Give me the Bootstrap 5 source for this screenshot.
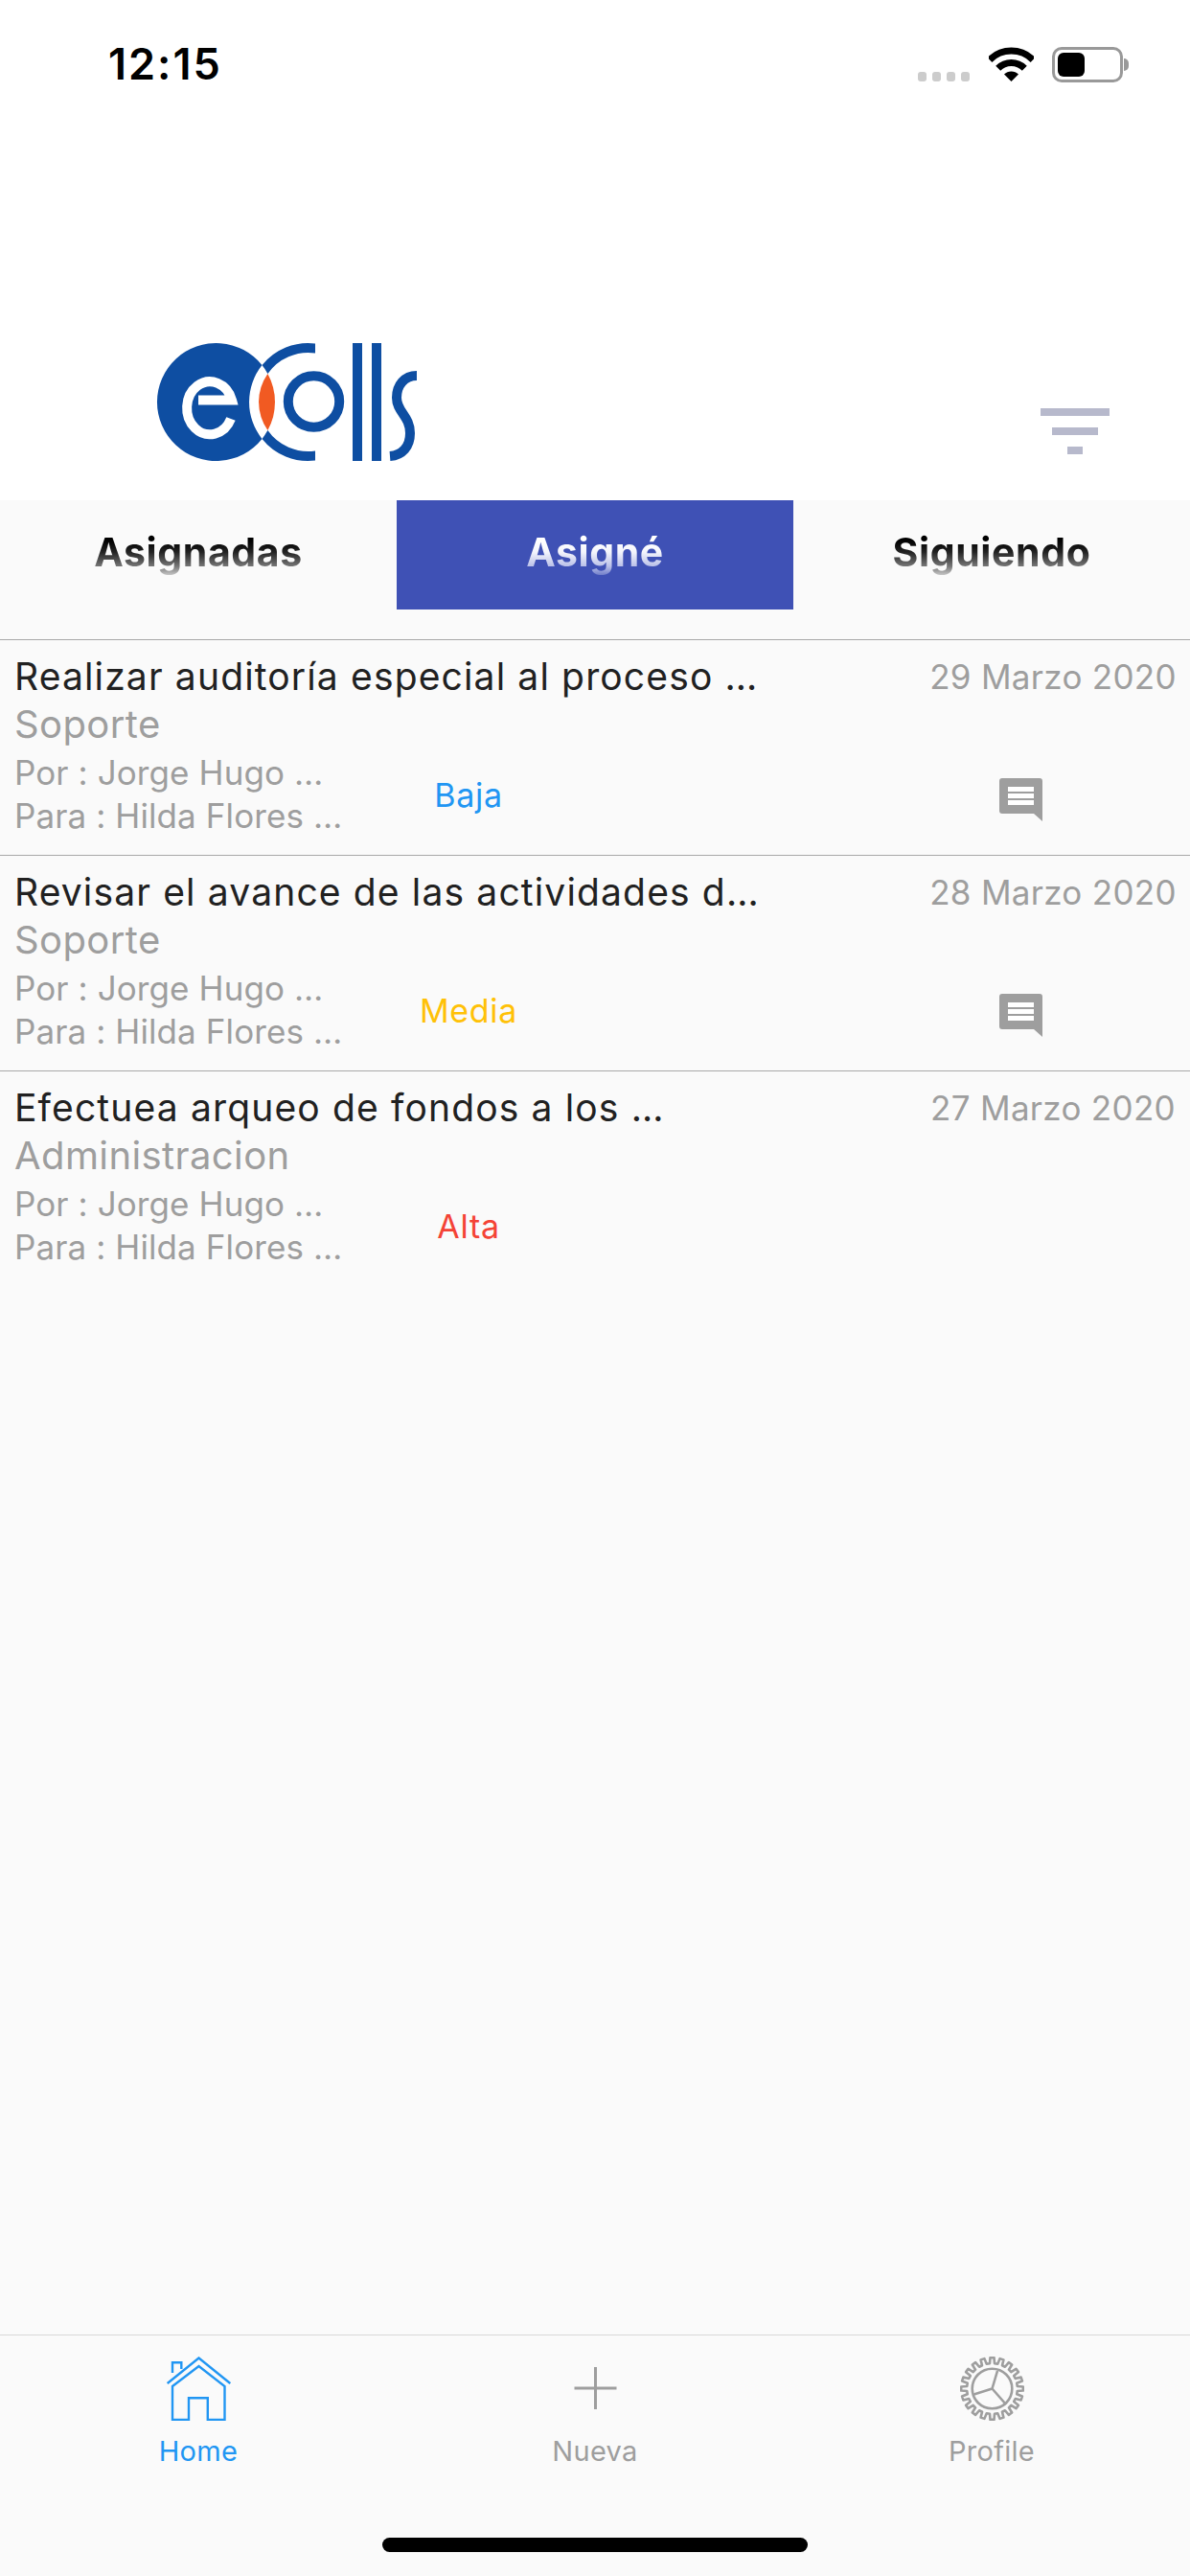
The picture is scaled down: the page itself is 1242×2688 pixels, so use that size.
<!DOCTYPE html>
<html lang="es">
<head>
<meta charset="utf-8">
<title>eColls</title>
<link href="https://cdn.jsdelivr.net/npm/bootstrap@5.3.0/dist/css/bootstrap.min.css" rel="stylesheet">
<style>
  html, body { margin: 0; height: 2688px; overflow: hidden; }
  body { background: #fafafa; font-family: Inter, "Liberation Sans", sans-serif; color: #212121; }
  .app-shell { height: 2688px; }
  .status-strip { height: 130px; background: #fff; padding: 0 65px 0 113px; }
  .clock { font-size: 45px; font-weight: 600; line-height: 1; color: #000; margin-top: 44px; letter-spacing: 2px; width: 845px; }
  .sig-dots { gap: 6px; margin-top: 75px; }
  .sig-dots span { width: 9px; height: 10px; border-radius: 3px; background: #ccc; display: block; }
  .wifi-glyph { width: 47px; height: 36px; margin-top: 49px; margin-left: 20px; }
  .batt { width: 74px; height: 37px; margin-top: 49px; margin-left: 19px; border: 3px solid #999; border-radius: 10px; padding: 3px; position: relative; }
  .batt-fill { width: 28px; height: 25px; background: #000; border-radius: 6px; }
  .batt::after { content: ""; position: absolute; left: 72px; top: 9px; width: 5px; height: 13px; background: #999; border-radius: 0 6px 6px 0; }
  .brand-strip { height: 392px; background: #fff; padding: 200px 0 0 130px; }
  .brand-logo { width: 330px; height: 170px; display: block; }
  .filter-glyph { width: 72px; height: 48px; margin: 96px 0 0 626px; }
  .tab-strip { height: 114px; }
  .tab-cell { height: 114px; }
  .tab-on { background: #3f51b5; }
  .tab-word { font-size: 41px; font-weight: 700; line-height: 60px; height: 60px; letter-spacing: .6px; background-clip: text; -webkit-background-clip: text; color: transparent; background-image: linear-gradient(to bottom, #000 30%, #222 50%, #777 75%, #fafafa 100%); }
  .tab-on .tab-word { background-image: linear-gradient(to bottom, #fff 30%, #f4f5fc 50%, #b9c0e8 75%, #3f51b5 100%); }
  .task-list { margin-top: 31px; }
  .task-list .task-row { height: 225px; border: 0; border-top: 1px solid #a8a8a8; border-radius: 0; background: transparent; padding: 13px 3px 0 15px; }
  .task-title { font-size: 39px; line-height: 50px; color: #212121; letter-spacing: 1.15px; white-space: nowrap; }
  .task-date { font-size: 35px; line-height: 50px; color: #9e9e9e; width: 280px; text-align: center; white-space: nowrap; letter-spacing: .3px; }
  .task-area { font-size: 40px; line-height: 50px; color: #9e9e9e; letter-spacing: .4px; }
  .task-meta { margin-top: 3px; }
  .task-people { width: 374px; font-size: 35px; line-height: 45px; color: #9e9e9e; letter-spacing: .1px; white-space: nowrap; }
  .task-prio { width: 200px; font-size: 34px; text-align: center; letter-spacing: .7px; }
  .prio-low { color: #2196f3; }
  .prio-mid { color: #ffc107; }
  .prio-high { color: #f44336; }
  .note-glyph { width: 45px; height: 45px; margin: 11px 0 0 454px; display: block; }
  .foot-bar { border-top: 1px solid #d8d8d8; height: 252px; }
  .foot-cell { color: #9e9e9e; font-size: 29px; line-height: 36px; padding-top: 22px; letter-spacing: .3px; }
  .foot-cell.is-on { color: #2196f3; }
  .foot-icon { width: 67px; height: 67px; display: block; margin: 0 auto 14px; }
  .home-pill { width: 444px; height: 15px; border-radius: 8px; background: #000; margin: 72px auto 0; }
</style>
</head>
<body>
<div class="app-shell d-flex flex-column">
  <div class="status-strip d-flex align-items-start">
    <div class="clock">12:15</div>
    <div class="sig-dots d-flex"><span></span><span></span><span></span><span></span></div>
    <svg class="wifi-glyph" viewBox="0 0 47 36" aria-hidden="true">
      <path d="M.9 13.4A32 32 0 0 1 46.1 13.4" fill="none" stroke="#000" stroke-width="7"/>
      <path d="M9.7 22.2A19.5 19.5 0 0 1 37.3 22.2" fill="none" stroke="#000" stroke-width="7"/>
      <path d="M23.5 36L16 28.5A10.6 10.6 0 0 1 31 28.5Z" fill="#000"/>
    </svg>
    <div class="batt"><div class="batt-fill"></div></div>
  </div>

  <div class="brand-strip d-flex align-items-start">
    <svg class="brand-logo flex-shrink-0" viewBox="0 0 330 170" role="img" aria-label="eColls">
      <path d="M143.5 51.1A61.5 61.5 0 1 0 143.5 127.9A61.5 61.5 0 0 1 143.5 51.1Z" fill="#0e4ea2"/>
      <path d="M143.5 51.1A61.5 61.5 0 0 1 199 28.5V38.5A51.5 51.5 0 0 0 149.4 59.9A61.5 61.5 0 0 0 143.5 51.1Z" fill="#0e4ea2"/>
      <path d="M143.5 127.9A61.5 61.5 0 0 0 199 150.5V140.5A51.5 51.5 0 0 1 149.4 119.1A61.5 61.5 0 0 1 143.5 127.9Z" fill="#0e4ea2"/>
      <path d="M149.4 59.9A61.5 61.5 0 0 1 149.4 119.1A51.5 51.5 0 0 1 149.4 59.9Z" fill="#f15a22"/>
      <path d="M77 87.5H112A24 27.5 0 1 0 111 107" fill="none" stroke="#fff" stroke-width="10"/>
      <circle cx="197.5" cy="89" r="26.7" fill="none" stroke="#0e4ea2" stroke-width="10"/>
      <rect x="238" y="28" width="10" height="123" fill="#0e4ea2"/>
      <rect x="258" y="28" width="10" height="123" fill="#0e4ea2"/>
      <path d="M305 62C292 62 284 72 284 85C284 100 298 104 298 122C298 136 290 145 277 146" fill="none" stroke="#0e4ea2" stroke-width="10"/>
    </svg>
    <svg class="filter-glyph flex-shrink-0" viewBox="0 0 72 48" aria-hidden="true">
      <rect x="0" y="0" width="72" height="8" fill="#b7b9cc"/>
      <rect x="12" y="20" width="48" height="8" fill="#b7b9cc"/>
      <rect x="28" y="40" width="16" height="8" fill="#b7b9cc"/>
    </svg>
  </div>

  <div class="tab-strip row g-0">
    <div class="tab-cell col-4 d-flex justify-content-center"><span class="tab-word mt-4">Asignadas</span></div>
    <div class="tab-cell tab-on col-4 d-flex justify-content-center"><span class="tab-word mt-4">Asigné</span></div>
    <div class="tab-cell col-4 d-flex justify-content-center"><span class="tab-word mt-4">Siguiendo</span></div>
  </div>

  <div class="task-list list-group">
    <div class="task-row list-group-item">
      <div class="d-flex justify-content-between">
        <div class="task-title">Realizar auditoría especial al proceso …</div>
        <div class="task-date">29 Marzo 2020</div>
      </div>
      <div class="task-area">Soporte</div>
      <div class="task-meta d-flex align-items-center">
        <div class="task-people"><div>Por : Jorge Hugo …</div><div>Para : Hilda Flores …</div></div>
        <div class="task-prio prio-low">Baja</div>
        <svg class="note-glyph" viewBox="0 0 45 45" aria-hidden="true"><path d="M3 0H42A3 3 0 0 1 45 3V45L36 37H3A3 3 0 0 1 0 34V3A3 3 0 0 1 3 0Z" fill="#9e9e9e"/><path d="M9 9H36V14H9ZM9 16H36V21H9ZM9 23H36V28H9Z" fill="#fff"/></svg>
      </div>
    </div>
    <div class="task-row list-group-item">
      <div class="d-flex justify-content-between">
        <div class="task-title">Revisar el avance de las actividades d…</div>
        <div class="task-date">28 Marzo 2020</div>
      </div>
      <div class="task-area">Soporte</div>
      <div class="task-meta d-flex align-items-center">
        <div class="task-people"><div>Por : Jorge Hugo …</div><div>Para : Hilda Flores …</div></div>
        <div class="task-prio prio-mid">Media</div>
        <svg class="note-glyph" viewBox="0 0 45 45" aria-hidden="true"><path d="M3 0H42A3 3 0 0 1 45 3V45L36 37H3A3 3 0 0 1 0 34V3A3 3 0 0 1 3 0Z" fill="#9e9e9e"/><path d="M9 9H36V14H9ZM9 16H36V21H9ZM9 23H36V28H9Z" fill="#fff"/></svg>
      </div>
    </div>
    <div class="task-row list-group-item">
      <div class="d-flex justify-content-between">
        <div class="task-title">Efectuea arqueo de fondos a los …</div>
        <div class="task-date">27 Marzo 2020</div>
      </div>
      <div class="task-area">Administracion</div>
      <div class="task-meta d-flex align-items-center">
        <div class="task-people"><div>Por : Jorge Hugo …</div><div>Para : Hilda Flores …</div></div>
        <div class="task-prio prio-high">Alta</div>
      </div>
    </div>
  </div>

  <div class="foot-bar mt-auto">
    <div class="row g-0">
      <div class="foot-cell is-on col-4 text-center">
        <svg class="foot-icon" viewBox="0 0 67 67" fill="none" stroke="#2196f3" stroke-width="2.4" aria-hidden="true">
          <path d="M.7 28L33.5 1.5L66.3 28"/>
          <path d="M6 17V6.2H15.3V13"/>
          <path d="M6 31L33.5 10L60.5 31V66H42.8V43.2H23V66H6Z"/>
        </svg>
        Home
      </div>
      <div class="foot-cell col-4 text-center">
        <svg class="foot-icon" viewBox="0 0 67 67" fill="none" stroke="#9e9e9e" stroke-width="3" aria-hidden="true">
          <path d="M33.5 11V55M11.5 33H55.5"/>
        </svg>
        Nueva
      </div>
      <div class="foot-cell col-4 text-center">
        <svg class="foot-icon" viewBox="0 0 67 67" fill="none" stroke="#9e9e9e" stroke-width="2.6" aria-hidden="true">
          <path id="gear-teeth" stroke-linejoin="round"/>
          <circle cx="33.5" cy="33.5" r="20.8"/>
          <path d="M33.5 33.5L39 15M33.5 33.5L14.5 39.5M33.5 33.5L48 50"/>
        </svg>
        Profile
      </div>
    </div>
    <div class="home-pill"></div>
  </div>
</div>
<script>
  (function () {
    var n = 20, d = '', c = 33.5, ro = 32.4, ri = 26.4, step = Math.PI * 2 / n;
    for (var i = 0; i < n; i++) {
      var a = i * step - Math.PI / 2;
      var pts = [[ri, a - step * .3], [ro, a - step * .2], [ro, a + step * .2], [ri, a + step * .3]];
      pts.forEach(function (p, j) {
        d += ((i === 0 && j === 0) ? 'M' : 'L') + (c + p[0] * Math.cos(p[1])).toFixed(2) + ' ' + (c + p[0] * Math.sin(p[1])).toFixed(2);
      });
    }
    document.getElementById('gear-teeth').setAttribute('d', d + 'Z');
  })();
</script>
<script src="https://cdn.jsdelivr.net/npm/bootstrap@5.3.0/dist/js/bootstrap.bundle.min.js"></script>
</body>
</html>
